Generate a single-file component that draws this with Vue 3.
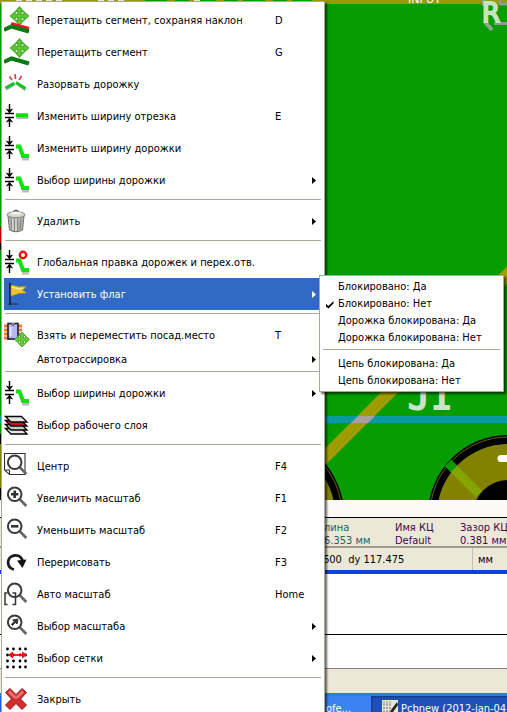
<script setup>
const groups = [
  [
    { icon: 'drag-slope', label: 'Перетащить сегмент, сохраняя наклон', key: 'D' },
    { icon: 'drag', label: 'Перетащить сегмент', key: 'G' },
    { icon: 'break', label: 'Разорвать дорожку' },
    { icon: 'width-seg', label: 'Изменить ширину отрезка', key: 'E' },
    { icon: 'width', label: 'Изменить ширину дорожки' },
    { icon: 'width', label: 'Выбор ширины дорожки', sub: true }
  ],
  [{ icon: 'trash', label: 'Удалить', sub: true }],
  [
    { icon: 'width-all', label: 'Глобальная правка дорожек и перех.отв.' },
    { icon: 'flag', label: 'Установить флаг', sub: true, active: true }
  ],
  [
    { icon: 'chip', label: 'Взять и переместить посад.место', key: 'T' },
    { label: 'Автотрассировка', sub: true }
  ],
  [
    { icon: 'width', label: 'Выбор ширины дорожки', sub: true },
    { icon: 'layers', label: 'Выбор рабочего слоя' }
  ],
  [
    { icon: 'center', label: 'Центр', key: 'F4' },
    { icon: 'zoom-in', label: 'Увеличить масштаб', key: 'F1' },
    { icon: 'zoom-out', label: 'Уменьшить масштаб', key: 'F2' },
    { icon: 'redraw', label: 'Перерисовать', key: 'F3' },
    { icon: 'auto', label: 'Авто масштаб', key: 'Home' },
    { icon: 'zoom-pick', label: 'Выбор масштаба', sub: true },
    { icon: 'grid', label: 'Выбор сетки', sub: true }
  ],
  [{ icon: 'close', label: 'Закрыть' }]
]
const flags = [
  [
    { label: 'Блокировано: Да' },
    { label: 'Блокировано: Нет', checked: true },
    { label: 'Дорожка блокирована: Да' },
    { label: 'Дорожка блокирована: Нет' }
  ],
  [{ label: 'Цепь блокирована: Да' }, { label: 'Цепь блокирована: Нет' }]
]
const isWidth = (i) => i === 'width' || i === 'width-seg' || i === 'width-all'
const isLens = (i) => ['center', 'zoom-in', 'zoom-out', 'auto', 'zoom-pick'].includes(i)
const dotXs = [3.5, 9.5, 16, 21.5]
const dotYs = [7, 13, 19, 25]
</script>

<template>
  <div class="app">
    <svg class="board" viewBox="0 0 507 500" preserveAspectRatio="xMinYMin slice">
      <rect width="507" height="500" fill="#069c02" />
      <rect width="507" height="4" fill="#9a9a06" />
      <path d="M145 .5H312" stroke="#069c02" stroke-dasharray="22 8 14 5" />
      <path d="M16 .5H66M98 .5H124M194 .5h10" stroke="#e8e8d0" stroke-dasharray="6 4" />
      <text x="408" y="3" class="net">INPUT</text>
      <path d="M0 227V243" stroke="#c00000" stroke-width="3" />
      <path d="M0 243V250M0 434V500" stroke="#000" stroke-width="3" />
      <path d="M0 444V488" stroke="#808000" stroke-width="3" />
      <path d="M484 0 V6 M485 22 L492 30" stroke="#86a886" stroke-width="4" />
      <path d="M500 0V4H507M494 23.500H507" stroke="#8e9a8e" stroke-width="3" fill="none" />
      <text x="482" y="22" class="ref">R</text>
      <path d="M317 465L512 270" stroke="#a29c04" stroke-width="12" />
      <rect y="416" width="507" height="7" fill="#069aa2" />
      <path d="M358 416H375L368 423H351Z" fill="#a8a0a0" />
      <text x="408" y="409" class="mark">J1</text>
      <g v-for="cx in [264, 508]" :key="cx">
        <circle :cx="cx" cy="515" r="80" fill="#000" />
        <circle :cx="cx" cy="515" r="78" fill="none" stroke="#9a8a10" stroke-width=".7" />
        <circle :cx="cx" cy="515" r="71" fill="#828200" />
        <circle :cx="cx" cy="515" r="35" fill="#000" />
      </g>
      <path d="M453 468L479 494" stroke="#84a400" stroke-width="9" />
      <path d="M448 463L454 469" stroke="#069c02" stroke-width="9" />
      <path d="M501 458.500H510" stroke="#fff" stroke-width="7" stroke-linecap="round" />
    </svg>

    <div class="msg-gap"></div>
    <div class="info">
      <div class="cell teal"><span>лина</span><span>6.353 мм</span></div>
      <div class="cell"><span>Имя КЦ</span><span>Default</span></div>
      <div class="cell"><span>Зазор КЦ</span><span>0.381 мм</span></div>
    </div>
    <div class="status">
      <span class="coords">600&nbsp; dy 117.475</span>
      <span class="unit">мм</span>
    </div>
    <div class="frame-edge"></div>
    <div class="sheet tall"></div>
    <div class="sheet short"></div>
    <div class="shelf"></div>
    <div class="taskbar">
      <button class="task first">ofe...</button>
      <button class="task current">
        <svg width="16" height="16" viewBox="0 0 16 16">
          <rect width="16" height="16" fill="#e6e6de" />
          <path d="M2 1V15M5 1V15M8 1V15M1 4H10M1 8H10M1 12H10" stroke="#8c8c84" stroke-dasharray="2 1" />
          <path d="M15 2L9 10L8 14L11 12L16 5" fill="#222" />
        </svg>
        <span>Pcbnew (2012-jan-04...</span>
      </button>
    </div>

    <div class="menu" role="menu">
      <div v-for="(group, gi) in groups" :key="gi" class="group">
        <button
          v-for="item in group"
          :key="item.label"
          class="item"
          :class="{ active: item.active, plain: !item.icon }"
          role="menuitem"
        >
          <svg v-if="item.icon" class="icon" viewBox="0 0 28 32" fill="none">
            <template v-if="item.icon === 'drag' || item.icon === 'drag-slope'">
              <path
                d="M15.500 3L19.500 7.500H17V10.500H20V8L24.500 12L20 16V13.500H17V16.500H19.500L15.500 21L11.500 16.500H14V13.500H11V16L6.500 12L11 8V10.500H14V7.500H11.500Z"
                fill="#62cc3a" stroke="#4cae2c" stroke-width="1.300"
              />
              <path v-if="item.icon === 'drag-slope'" d="M7 20L25 25" stroke="#f01824" stroke-width="4" />
              <path d="M0 26L7.500 22.500L25 27.500" stroke="#0a7a14" stroke-width="4" />
            </template>

            <template v-else-if="item.icon === 'break'">
              <path d="M2 21.500L10.500 16.500M13 16L21.500 22" stroke="#a8b0a8" stroke-width="2.500" />
              <path d="M1.500 20L10.500 15M12 14.500L21.500 20.500" stroke="#14c224" stroke-width="3" />
              <path d="M5.500 8.500L8 12M11 6L11.500 11M17.500 8L15 12" stroke="#d83a4a" stroke-width="1.600" />
            </template>

            <template v-else-if="isWidth(item.icon)">
              <path d="M5.500 4V10M5.500 27V21M1 13.500H10M1 17.500H10" stroke="#000" stroke-width="1.400" />
              <path d="M1.800 8.500L5.500 9.700L9.200 8.500L5.500 13.500ZM1.800 22.500L5.500 21.300L9.200 22.500L5.500 17.500Z" fill="#000" />
              <template v-if="item.icon === 'width-seg'">
                <path d="M12.500 18H24.500" stroke="#b8c0b8" stroke-width="2" />
                <path d="M12 15.300H24" stroke="#08e010" stroke-width="4" />
              </template>
              <template v-else>
                <path d="M18 27H25" stroke="#bcbcbc" stroke-width="3" />
                <path d="M12 14.500H15.500L19 24H25" stroke="#14e014" stroke-width="4" />
              </template>
              <circle v-if="item.icon === 'width-all'" cx="19" cy="9" r="3.200" fill="#fff" stroke="#f01010" stroke-width="2.400" />
            </template>

            <template v-else-if="item.icon === 'trash'">
              <path d="M4 11H20L18.500 25Q12 28.500 5.500 25Z" fill="#b4b4b0" stroke="#70706c" />
              <path d="M7 13.500L8 25M17 13.500L16 25M10.300 14V26M13.700 14V26" stroke="#7c7c78" />
              <path d="M8.700 14L9 25M12 14V26" stroke="#ecece8" />
              <ellipse cx="12" cy="9.700" rx="9" ry="3" fill="#d8d8d4" stroke="#80807c" />
              <path d="M5 8.500Q12 4.500 19 8.500Q12 11 5 8.500Z" fill="#eeeeea" />
              <path d="M9.500 6.500Q12 4 14.500 6.500" stroke="#666" stroke-width="1.400" />
            </template>

            <template v-else-if="item.icon === 'flag'">
              <ellipse cx="9" cy="26" rx="6" ry="1.200" fill="#24488c" />
              <path d="M6 5V27" stroke="#1c2430" stroke-width="1.800" />
              <path d="M7 7L15 8.800L22.500 8.500L18.500 12L22.500 15L15 15.500L7 18Z" fill="#ecc42c" stroke="#b48c10" stroke-width=".5" />
              <path d="M8 9L15 11L19 10" stroke="#fbe88a" stroke-width="1.500" />
            </template>

            <template v-else-if="item.icon === 'chip'">
              <path d="M0 7H18M0 11H18M0 15H16M0 19H14" stroke="#e88028" stroke-width="2.800" />
              <rect x="4" y="4.500" width="10" height="15.500" fill="#b8b8f0" stroke="#20203c" stroke-width="1.600" />
              <path d="M7 4.500Q9 8 11 4.500" fill="#fff" stroke="#20203c" />
              <path d="M6.500 8V17" stroke="#e4e4ff" stroke-width="2" />
              <path
                d="M18 13L21.500 16.500H19.500V19H21.500V17L25.500 20.500L21.500 24V22H19.500V24.500H21.500L18 28L14.500 24.500H16.500V22H14.500V24L10.500 20.500L14.500 17V19H16.500V16.500H14.500Z"
                fill="#62cc3a" stroke="#4cae2c" stroke-width="1"
              />
            </template>

            <template v-else-if="item.icon === 'layers'">
              <path d="M1.500 19.500H17.500L23 25H7Z" fill="#e8e8e8" stroke="#000" stroke-width="1.300" />
              <path d="M1.500 15.500H17.500L23 21H7Z" fill="#c8c8c8" stroke="#000" stroke-width="1.300" />
              <path d="M1.500 11.500H17.500L23 17H7Z" fill="#c81420" stroke="#000" stroke-width="1.300" />
              <path d="M1.500 7.500H17.500L23 13H7Z" fill="#e4e4e4" stroke="#000" stroke-width="1.300" />
            </template>

            <template v-else-if="isLens(item.icon)">
              <path v-if="item.icon === 'center'" d="M.5 3.500H21V24.500H5.500L.5 20ZM.5 20H5.500V24.500" stroke="#333" stroke-width="1.100" />
              <path v-if="item.icon === 'auto'" d="M3.500 15H1V26.500H3.500M8.500 15H11.500V26.500H8.500" stroke="#333" stroke-width="1.500" />
              <path d="M15.500 17L22.300 24" stroke="#666" stroke-width="2.600" />
              <circle cx="10.700" cy="12.300" r="6.800" stroke="#3a3a3a" stroke-width="2" />
              <path v-if="item.icon === 'zoom-in'" d="M7 12.300H14.400M10.700 8.600V16" stroke="#333" stroke-width="2.600" />
              <path v-if="item.icon === 'zoom-out'" d="M7 12.300H14.400" stroke="#333" stroke-width="2.600" />
              <path v-if="item.icon === 'zoom-pick'" d="M14 9L13 14L11.300 12.500L8.500 15.500L7.300 14.300L10.300 11.500L8.700 10Z" fill="#333" stroke="#333" />
            </template>

            <template v-else-if="item.icon === 'redraw'">
              <path d="M10 23.500C2 21.500 2 10.500 10.500 9.500C15.500 9 18.500 12 18.500 16" stroke="#1c1c1c" stroke-width="2.800" />
              <path d="M13 14.500L22.500 13.500L18.500 22Z" fill="#111" />
            </template>

            <template v-else-if="item.icon === 'grid'">
              <template v-for="y in dotYs" :key="y">
                <circle v-for="x in dotXs" :key="x" :cx="x" :cy="y" r="1.400" fill="#000" />
              </template>
              <path d="M6 13H21" stroke="#f01010" stroke-width="1.800" />
              <path d="M4 13L9 9.500V16.500ZM23 13L18 9.500V16.500Z" fill="#f01010" />
            </template>

            <template v-else-if="item.icon === 'close'">
              <path
                d="M6 5.500L12 11.500L18 5.500L22.500 9.500L16.500 16L22.500 22L18 26.500L12 20.500L6 26.500L1.500 22L7.500 16L1.500 9.500Z"
                fill="#d42c2c" stroke="#8c1818" stroke-linejoin="round"
              />
              <path d="M6 7.500L12 13.500L18 7.500L20 9.500L14 15.500H10L4 9.500Z" fill="#e87070" />
            </template>
          </svg>
          <span class="label">{{ item.label }}</span>
          <span v-if="item.key" class="key">{{ item.key }}</span>
          <svg v-if="item.sub" class="arrow" viewBox="0 0 4 7"><path d="M0 0L4 3.500L0 7Z" fill="currentColor" /></svg>
        </button>
      </div>
    </div>

    <div class="menu submenu" role="menu">
      <div v-for="(group, gi) in flags" :key="gi" class="group">
        <button v-for="item in group" :key="item.label" class="item plain" role="menuitem">
          <svg v-if="item.checked" class="check" viewBox="0 0 8 8">
            <path d="M0 3L2.500 5L7.500 0V2.500L2.500 7.500L0 5.500Z" fill="#000" />
          </svg>
          <span class="label">{{ item.label }}</span>
        </button>
      </div>
    </div>
  </div>
</template>

<style>
body {
  overflow: hidden;
}
</style>

<style scoped>
.app {
  position: relative;
  display: flex;
  flex-direction: column;
  height: 100vh;
  overflow: hidden;
  background: #fff;
  font-family: "DejaVu Sans Condensed", "DejaVu Sans", "Noto Sans", sans-serif;
  font-size: 11px;
  line-height: 13px;
}
.board {
  display: block;
  flex: 1;
  min-height: 0;
  width: 100%;
}
.net {
  fill: #fff;
  font: 11px "DejaVu Sans", sans-serif;
}
.ref {
  fill: #c4e4c4;
  stroke: #c4e4c4;
  font: 26px "DejaVu Sans", sans-serif;
  stroke-width: 2px;
}
.mark {
  fill: #c8e4c8;
  stroke: #c8e4c8;
  stroke-width: 2px;
  stroke-linejoin: round;
  font: 36px "DejaVu Sans Mono", monospace;
}
.msg-gap {
  height: 17px;
  background: #fbfaf7;
}
.info {
  display: flex;
  height: 29px;
  box-sizing: border-box;
  padding: 3px 0 0 324px;
  border-top: 1px solid #000;
  background: #ebe8d8;
  overflow: hidden;
}
.cell {
  display: flex;
  flex-direction: column;
  flex: none;
  width: 65px;
  color: #400848;
  white-space: nowrap;
}
.teal {
  width: 71px;
  color: #2a5c60;
}
.status {
  display: flex;
  height: 24px;
  box-sizing: border-box;
  padding-left: 323px;
  border-top: 2px solid #9c9a8c;
  background: #ebe8d8;
  line-height: 24px;
  white-space: nowrap;
  overflow: hidden;
}
.coords {
  width: 149px;
  border-right: 1px solid #c4c0ac;
}
.unit {
  padding-left: 5px;
}
.frame-edge {
  height: 4px;
  background: #0a44dc;
}
.sheet {
  background: #fff;
  box-sizing: border-box;
}
.tall {
  height: 61px;
  border-bottom: 1px solid #000;
}
.short {
  height: 34px;
  border-bottom: 1px solid #808080;
}
.shelf {
  height: 24px;
  background: #ebe8d8;
}
.taskbar {
  display: flex;
  height: 19px;
  padding-left: 270px;
  box-sizing: border-box;
  border-top: 3px solid #3478e8;
  background: #245edb;
  overflow: hidden;
}
.task {
  display: flex;
  align-items: center;
  gap: 3px;
  flex: none;
  height: 24px;
  border: 0;
  padding: 0 16px 0 56px;
  background: #3c82f4;
  color: #fff;
  font: inherit;
  white-space: nowrap;
}
.first {
  width: 101px;
}
.current {
  padding-left: 11px;
  background: #1e50b8;
  box-shadow: inset 1px 1px 2px #123880;
}
.menu {
  position: absolute;
  top: 1px;
  left: 1px;
  width: 324px;
  box-sizing: border-box;
  padding: 2px;
  border: 1px solid #aca899;
  background: #fff;
  box-shadow: 2px 2px 2px rgba(0, 0, 0, 0.6);
}
.submenu {
  top: 275px;
  left: 319px;
  width: 185px;
}
.group + .group::before {
  content: "";
  display: block;
  height: 1px;
  margin: 3px 1px 5px;
  background: #aca899;
}
.item {
  display: flex;
  align-items: center;
  position: relative;
  width: 100%;
  height: 32px;
  border: 0;
  padding: 0 6px 0 0;
  background: transparent;
  color: #000;
  font: inherit;
  text-align: left;
  white-space: nowrap;
}
.plain {
  height: 17px;
  padding-left: 33px;
}
.submenu .plain {
  padding-left: 16px;
}
.active {
  background: #316ac5;
  color: #fff;
}
.icon {
  flex: none;
  width: 28px;
  height: 32px;
  margin-right: 5px;
}
.label {
  flex: 1;
}
.key {
  width: 41px;
}
.arrow {
  width: 4px;
  height: 7px;
}
.check {
  position: absolute;
  left: 4px;
  top: 6px;
  width: 8px;
  height: 8px;
}
</style>
